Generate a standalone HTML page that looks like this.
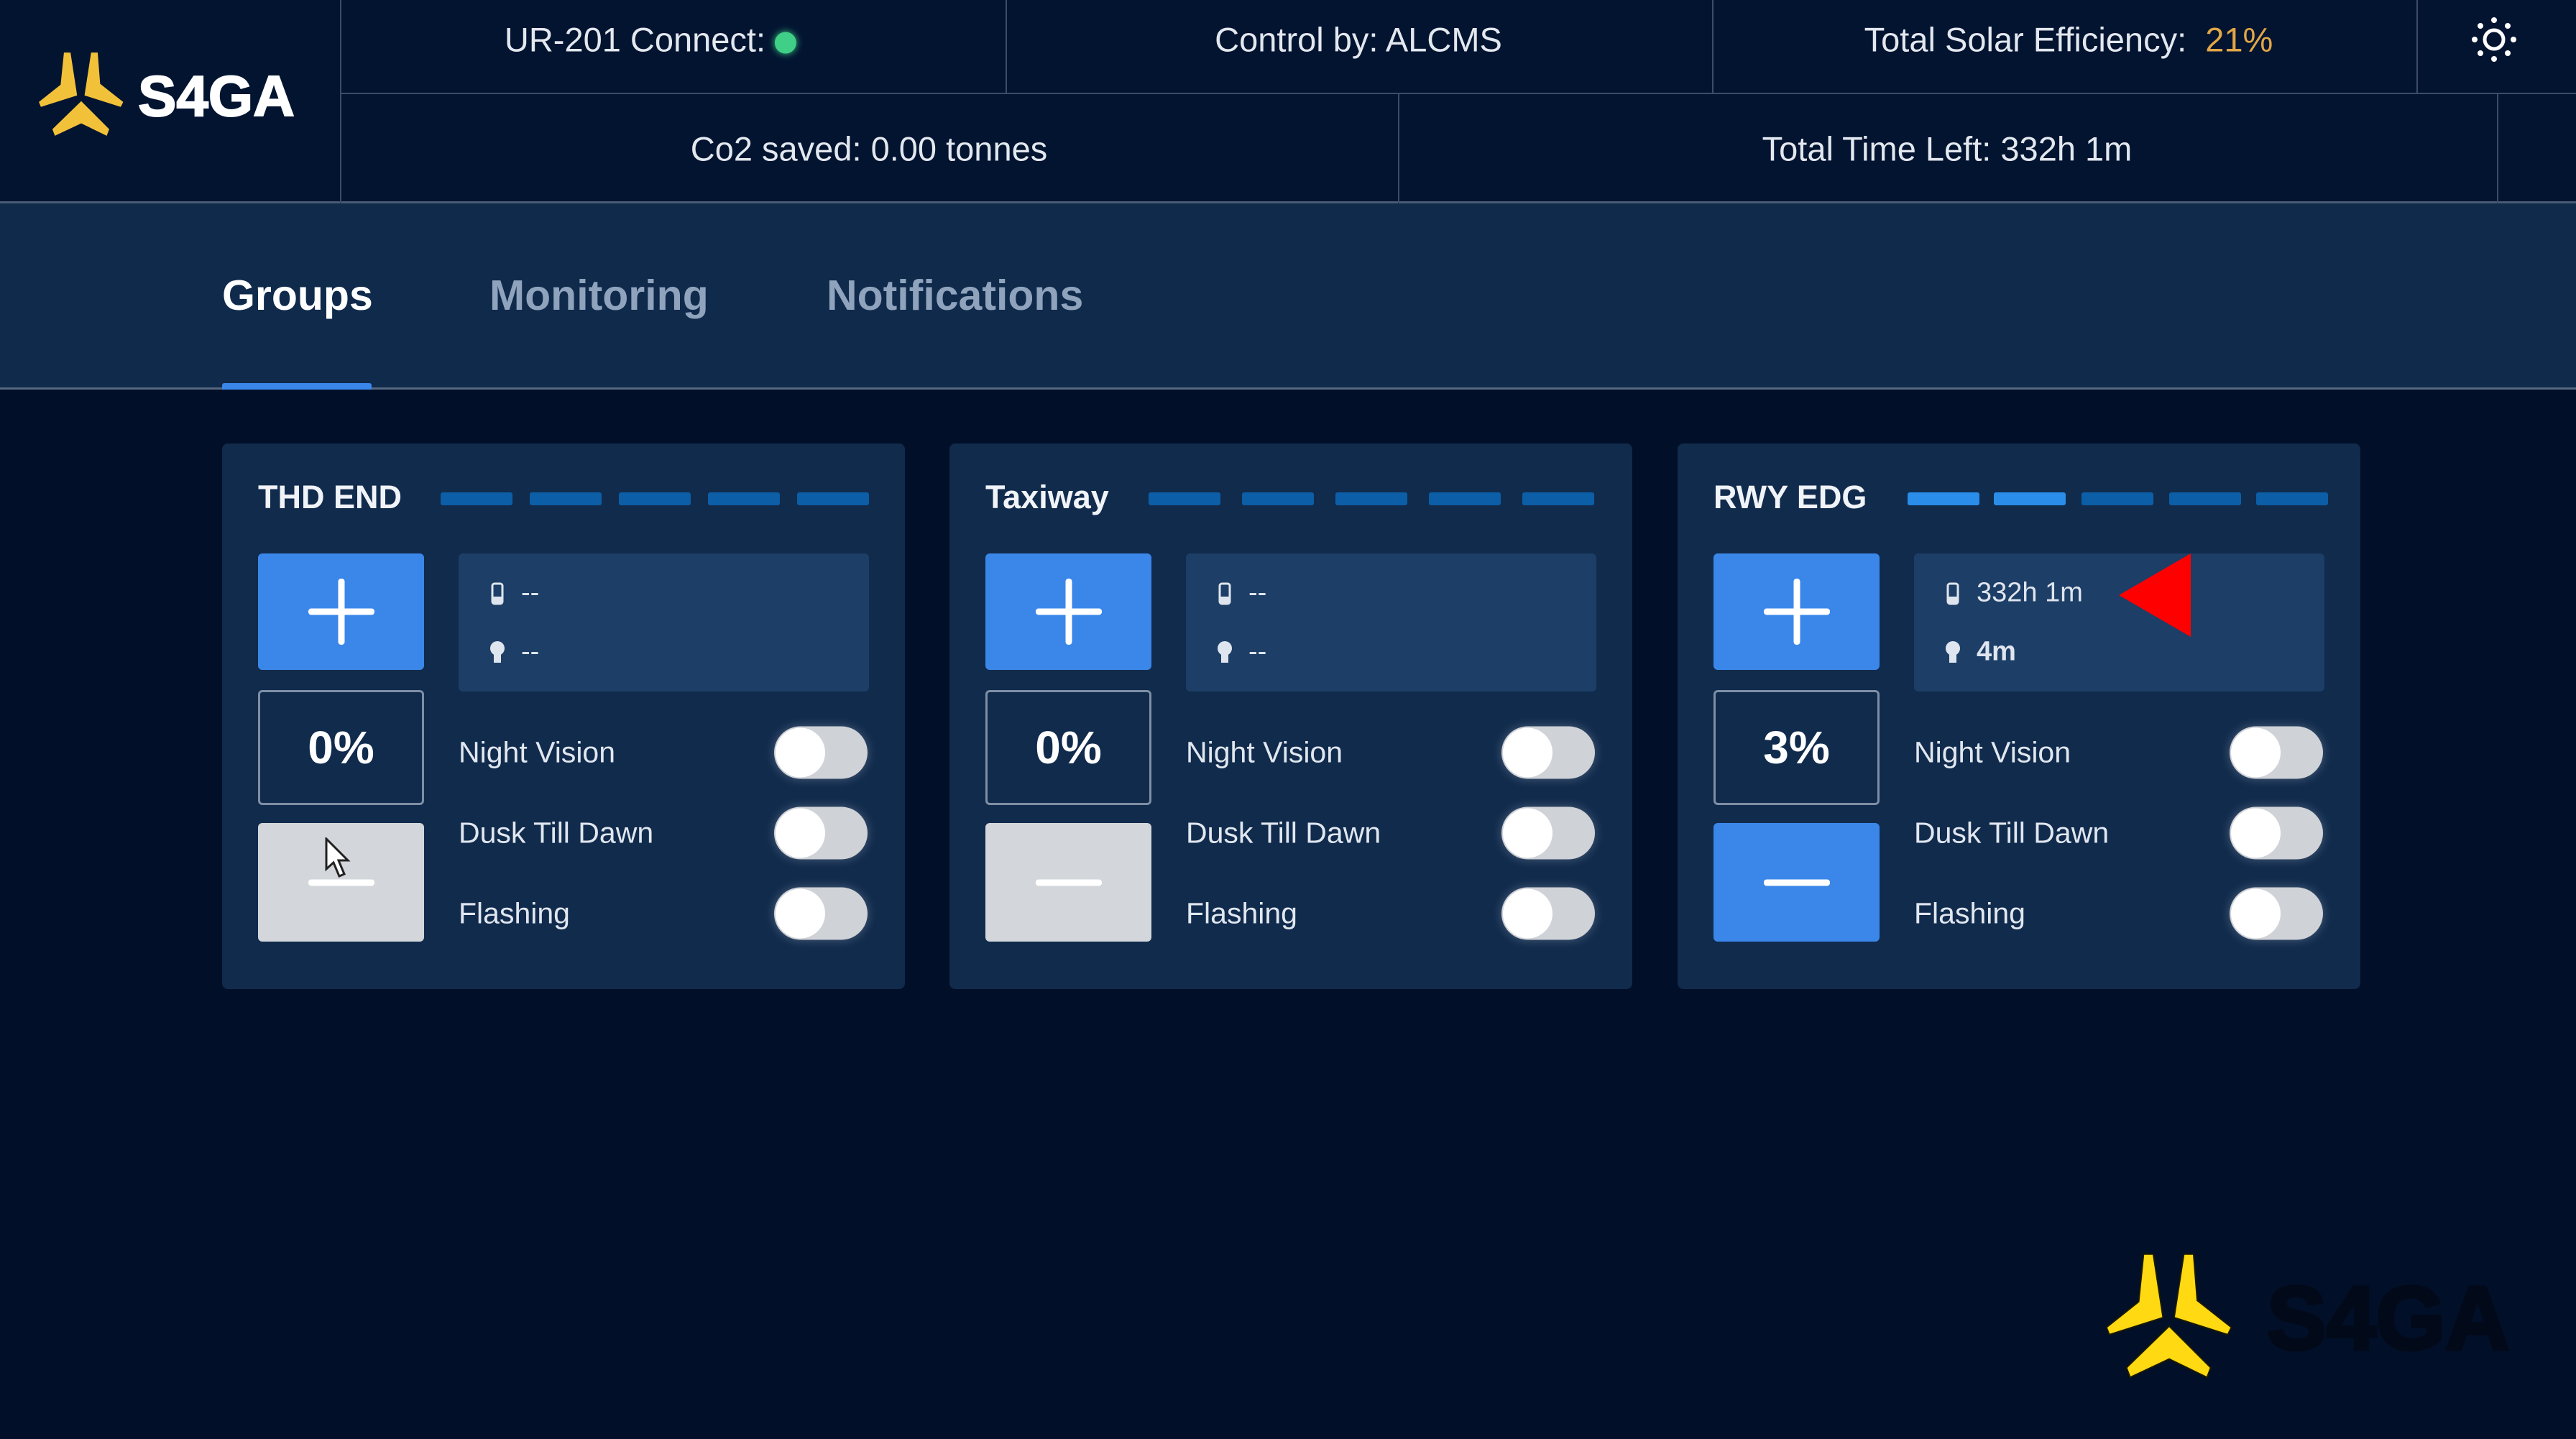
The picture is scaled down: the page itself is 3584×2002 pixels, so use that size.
<!DOCTYPE html>
<html><head><meta charset="utf-8"><style>
*{margin:0;padding:0;box-sizing:border-box}
body{width:3584px;height:2002px;background:#020f28;font-family:"Liberation Sans",sans-serif;position:relative;overflow:hidden;color:#e6ebf2}
.a{position:absolute}
.hdr{left:0;top:0;width:3584px;height:283px;background:#031431;border-bottom:3px solid #4a5a74}
.vl{position:absolute;width:2px;background:#3c4c68}
.ht{position:absolute;font-size:47px;color:#e3e8ef;white-space:nowrap;transform:translate(-50%,-50%)}
.tabs{left:0;top:283px;width:3584px;height:259px;background:#0f2a4b;border-bottom:3px solid #56677f}
.tab{position:absolute;top:411px;transform:translateY(-50%);font-size:59px;font-weight:bold;color:#8fa3bd}
.card{position:absolute;top:617px;width:950px;height:759px;background:#112b4d;border-radius:8px}
.card .t{position:absolute;left:50px;top:75px;transform:translateY(-50%);font-size:45px;font-weight:bold;color:#f0f3f7}
.bar{position:absolute;top:68px;width:100px;height:18px;border-radius:3px;background:#0c5ea6}
.plus,.minus{position:absolute;left:50px;width:231px;border-radius:6px}
.plus{top:153px;height:162px;background:#3a87e9}
.plus:before,.plus:after,.minus:before{content:"";position:absolute;left:50%;top:50%;background:#fff;border-radius:4px;transform:translate(-50%,-50%)}
.plus:before{width:92px;height:9px}.plus:after{width:9px;height:92px}
.minus{top:528px;height:165px;background:#d3d6da}
.minus:before{width:92px;height:9px}
.minus.b{background:#3a87e9}
.pct{position:absolute;left:50px;top:343px;width:231px;height:160px;border:3px solid #7e8ea4;border-radius:6px;display:flex;align-items:center;justify-content:center;font-size:64px;font-weight:bold;color:#fff}
.info{position:absolute;left:329px;top:153px;width:571px;height:192px;background:#1d3e66;border-radius:6px}
.il{position:absolute;left:87px;font-size:38px;color:#dfe5ee;transform:translateY(-50%)}
.ic{position:absolute;left:44px;width:20px;transform:translateY(-50%)}
.lb{position:absolute;left:329px;font-size:41px;color:#e1e7ef;transform:translateY(-50%)}
.tg{position:absolute;left:768px;width:130px;height:73px;border-radius:37px;background:#cfd2d7;transform:translateY(-50%);box-shadow:0 0 14px rgba(255,255,255,.25)}
.tg:after{content:"";position:absolute;left:2px;top:2px;width:69px;height:69px;border-radius:50%;background:#fff}
</style></head><body>
<div class="a hdr"></div>
<div class="vl" style="left:473px;top:0;height:283px"></div>
<div class="a" style="left:473px;top:129px;width:3111px;height:2px;background:#3c4c68"></div>
<div class="vl" style="left:1399px;top:0;height:130px"></div>
<div class="vl" style="left:2382px;top:0;height:130px"></div>
<div class="vl" style="left:3362px;top:0;height:130px"></div>
<div class="vl" style="left:1945px;top:130px;height:153px"></div>
<div class="vl" style="left:3474px;top:130px;height:153px"></div>
<svg class="a" style="left:46px;top:72px" width="134" height="118" viewBox="85 130 520 515"><g fill="#f2c13a"><polygon points="240,135 280,135 320,395 100,465 88,435 220,330"/><polygon points="405,135 445,135 460,325 600,435 585,465 365,395"/><polygon points="345,430 515,600 500,640 345,565 185,640 170,600"/></g></svg>
<div class="a" style="left:192px;top:88px;font-size:80px;font-weight:bold;color:#fff;letter-spacing:0px;-webkit-text-stroke:2px #fff">S4GA</div>
<div class="ht" style="left:905px;top:55px">UR-201 Connect: <span style="display:inline-block;width:30px;height:30px;border-radius:50%;background:#3fcf86;box-shadow:0 0 10px #3fcf86;vertical-align:middle"></span></div>
<div class="ht" style="left:1890px;top:55px">Control by: ALCMS</div>
<div class="ht" style="left:2878px;top:55px">Total Solar Efficiency: &nbsp;<span style="color:#e1a746">21%</span></div>
<svg class="a" style="left:3436px;top:21px" width="68" height="68" viewBox="-34 -34 68 68"><circle r="13" fill="none" stroke="#fff" stroke-width="5"/><g fill="#fff"><circle cx="0" cy="-27" r="4"/><circle cx="0" cy="27" r="4"/><circle cx="-27" cy="0" r="4"/><circle cx="27" cy="0" r="4"/><circle cx="19" cy="19" r="4"/><circle cx="-19" cy="19" r="4"/><circle cx="19" cy="-19" r="4"/><circle cx="-19" cy="-19" r="4"/></g></svg>
<div class="ht" style="left:1209px;top:207px">Co2 saved: 0.00 tonnes</div>
<div class="ht" style="left:2709px;top:207px">Total Time Left: 332h 1m</div>
<div class="a tabs"></div>
<div class="tab" style="left:309px;color:#fff">Groups</div>
<div class="tab" style="left:681px">Monitoring</div>
<div class="tab" style="left:1150px">Notifications</div>
<div class="a" style="left:309px;top:533px;width:208px;height:9px;background:#3a87e9;border-radius:3px 3px 0 0"></div>

<div class="card" style="left:309px">
<div class="t">THD END</div>
<div class="bar" style="left:304px"></div><div class="bar" style="left:428px"></div><div class="bar" style="left:552px"></div><div class="bar" style="left:676px"></div><div class="bar" style="left:800px"></div>
<div class="plus"></div>
<div class="info"><svg class="ic" style="top:55px" width="20" height="34" viewBox="0 0 20 34"><rect x="3" y="4" width="14" height="28" rx="3" fill="none" stroke="#dfe5ee" stroke-width="3"/><rect x="3" y="22" width="14" height="10" fill="#dfe5ee"/></svg><div class="il" style="top:55px">--</div>
<svg class="ic" style="top:137px" width="20" height="34" viewBox="0 0 20 34"><circle cx="10" cy="12" r="10" fill="#dfe5ee"/><rect x="5" y="20" width="10" height="12" fill="#dfe5ee"/></svg><div class="il" style="top:137px">--</div></div>
<div class="pct">0%</div>
<div class="minus"></div>
<div class="lb" style="top:430px">Night Vision</div><div class="tg" style="top:430px"></div>
<div class="lb" style="top:542px">Dusk Till Dawn</div><div class="tg" style="top:542px"></div>
<div class="lb" style="top:654px">Flashing</div><div class="tg" style="top:654px"></div>
</div>

<div class="card" style="left:1321px">
<div class="t">Taxiway</div>
<div class="bar" style="left:277px"></div><div class="bar" style="left:407px"></div><div class="bar" style="left:537px"></div><div class="bar" style="left:667px"></div><div class="bar" style="left:797px"></div>
<div class="plus"></div>
<div class="info"><svg class="ic" style="top:55px" width="20" height="34" viewBox="0 0 20 34"><rect x="3" y="4" width="14" height="28" rx="3" fill="none" stroke="#dfe5ee" stroke-width="3"/><rect x="3" y="22" width="14" height="10" fill="#dfe5ee"/></svg><div class="il" style="top:55px">--</div>
<svg class="ic" style="top:137px" width="20" height="34" viewBox="0 0 20 34"><circle cx="10" cy="12" r="10" fill="#dfe5ee"/><rect x="5" y="20" width="10" height="12" fill="#dfe5ee"/></svg><div class="il" style="top:137px">--</div></div>
<div class="pct">0%</div>
<div class="minus"></div>
<div class="lb" style="top:430px">Night Vision</div><div class="tg" style="top:430px"></div>
<div class="lb" style="top:542px">Dusk Till Dawn</div><div class="tg" style="top:542px"></div>
<div class="lb" style="top:654px">Flashing</div><div class="tg" style="top:654px"></div>
</div>

<div class="card" style="left:2334px">
<div class="t">RWY EDG</div>
<div class="bar" style="left:320px;background:#2a8de9"></div><div class="bar" style="left:440px;background:#2a8de9"></div><div class="bar" style="left:562px"></div><div class="bar" style="left:684px"></div><div class="bar" style="left:805px"></div>
<div class="plus"></div>
<div class="info"><svg class="ic" style="top:55px" width="20" height="34" viewBox="0 0 20 34"><rect x="3" y="4" width="14" height="28" rx="3" fill="none" stroke="#dfe5ee" stroke-width="3"/><rect x="3" y="22" width="14" height="10" fill="#dfe5ee"/></svg><div class="il" style="top:55px">332h 1m</div>
<svg class="ic" style="top:137px" width="20" height="34" viewBox="0 0 20 34"><circle cx="10" cy="12" r="10" fill="#dfe5ee"/><rect x="5" y="20" width="10" height="12" fill="#dfe5ee"/></svg><div class="il" style="top:137px;font-weight:bold">4m</div></div>
<div class="pct">3%</div>
<div class="minus b"></div>
<div class="lb" style="top:430px">Night Vision</div><div class="tg" style="top:430px"></div>
<div class="lb" style="top:542px">Dusk Till Dawn</div><div class="tg" style="top:542px"></div>
<div class="lb" style="top:654px">Flashing</div><div class="tg" style="top:654px"></div>
</div>

<svg class="a" style="left:2948px;top:770px" width="100" height="116" viewBox="0 0 100 116"><polygon points="100,0 100,116 0,58" fill="#f00"/></svg>
<svg class="a" style="left:450px;top:1165px" width="40" height="60" viewBox="0 0 40 60"><polygon points="4,2 4,44 14,35 22,54 29,51 21,32 34,32" fill="#fff" stroke="#222" stroke-width="3"/></svg>

<svg class="a" style="left:2928px;top:1743px" width="180" height="175" viewBox="85 130 520 515"><g fill="#ffd912" stroke="#1a1a00" stroke-width="6"><polygon points="240,135 280,135 320,395 100,465 88,435 220,330"/><polygon points="405,135 445,135 460,325 600,435 585,465 365,395"/><polygon points="345,430 515,600 500,640 345,565 185,640 170,600"/></g></svg>
<div class="a" style="left:3154px;top:1764px;font-size:124px;font-weight:bold;color:#020a1a;letter-spacing:0px;-webkit-text-stroke:5px #020a1a">S4GA</div>
</body></html>
